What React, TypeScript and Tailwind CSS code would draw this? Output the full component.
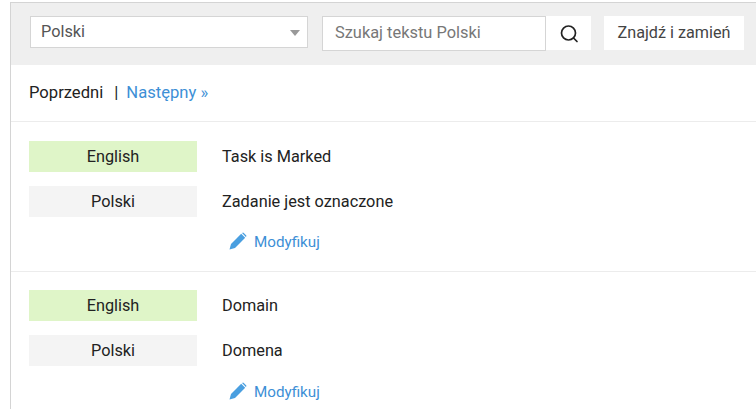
import React from "react";

function Pencil() {
  return (
    <svg width="18" height="18" viewBox="0 0 18 18" className="shrink-0 -mt-[3px] -ml-px">
      <path d="M0.5 17.5 L2 12 L12.2 1.8 L16.2 5.8 L6 16 Z" fill="#4a9fe0" />
      <path d="M13.2 0.9 Q14 0.2 14.8 0.9 L17.1 3.2 Q17.8 4 17.1 4.8 L16.9 5 L13 1.1 Z" fill="#4a9fe0" />
    </svg>
  );
}

function Entry({ en, pl, top, gap }: { en: string; pl: string; top: string; gap: string }) {
  return (
    <div className={`flex flex-col border-b border-[#ececec] h-[150px] ${top}`}>
      <div className="flex items-center h-[31px] pt-px">
        <div className="w-[168px] ml-[18px] -mt-px h-[31px] pt-px bg-[#dff5c8] flex items-center justify-center text-[#222]">English</div>
        <div className="ml-[25px] text-[#222]">{en}</div>
      </div>
      <div className="flex items-center h-[31px] mt-[14px] pt-px">
        <div className="w-[168px] ml-[18px] -mt-px h-[31px] pt-px bg-[#f4f4f4] flex items-center justify-center text-[#222]">Polski</div>
        <div className="ml-[25px] text-[#222]">{pl}</div>
      </div>
      <div className={`flex items-center ml-[219px] text-[#3d8fd6] text-[15.2px] gap-[7px] ${gap}`}>
        <Pencil />
        <span>Modyfikuj</span>
      </div>
    </div>
  );
}

export default function App() {
  return (
    <div className="w-[756px] h-[409px] overflow-hidden bg-white pt-[2px] text-[16.3px] font-['Roboto',sans-serif]">
      <div className="ml-[10px] h-[420px] border-l border-t border-[#d4d4d4]">
        <div className="h-[62px] bg-[#efefef] flex items-start pt-[13px] pl-[19px]">
          <div className="w-[278px] h-[32px] bg-white border border-[#d5d5d5] flex items-center justify-between pl-[10px] pr-[7px] pt-px text-[#555]">
            <span>Polski</span>
            <span className="w-0 h-0 border-x-[5px] border-x-transparent border-t-[6px] border-t-[#999]" />
          </div>
          <div className="w-[224px] h-[35px] ml-[14px] bg-white border border-[#d5d5d5] flex items-center pl-[12px] text-[#777] text-[16.4px]">
            Szukaj tekstu Polski
          </div>
          <div className="w-[45px] h-[34px] bg-white flex items-center justify-center pt-px">
            <svg width="20" height="20" viewBox="0 0 20 20" fill="none" stroke="#222" strokeWidth="1.7">
              <circle cx="9.5" cy="9" r="7" />
              <path d="M14.5 14 L18 17.5" strokeLinecap="round" />
            </svg>
          </div>
          <div className="w-[140px] h-[34px] ml-[13px] bg-white flex items-center justify-center text-[#444] text-[16.2px]">
            Znajdź i zamień
          </div>
        </div>
        <div className="h-[57px] border-b border-[#ececec] flex items-center pl-[18px] pt-px text-[16.6px]">
          <span className="text-[#222]">Poprzedni</span>
          <span className="ml-[11px] mr-[8px] text-[#222]">|</span>
          <span className="text-[#3d8fd6]">Następny »</span>
        </div>
        <Entry en="Task is Marked" pl="Zadanie jest oznaczone" top="pt-[19px]" gap="mt-[14px]" />
        <Entry en="Domain" pl="Domena" top="pt-[18px]" gap="mt-[15px]" />
      </div>
    </div>
  );
}
